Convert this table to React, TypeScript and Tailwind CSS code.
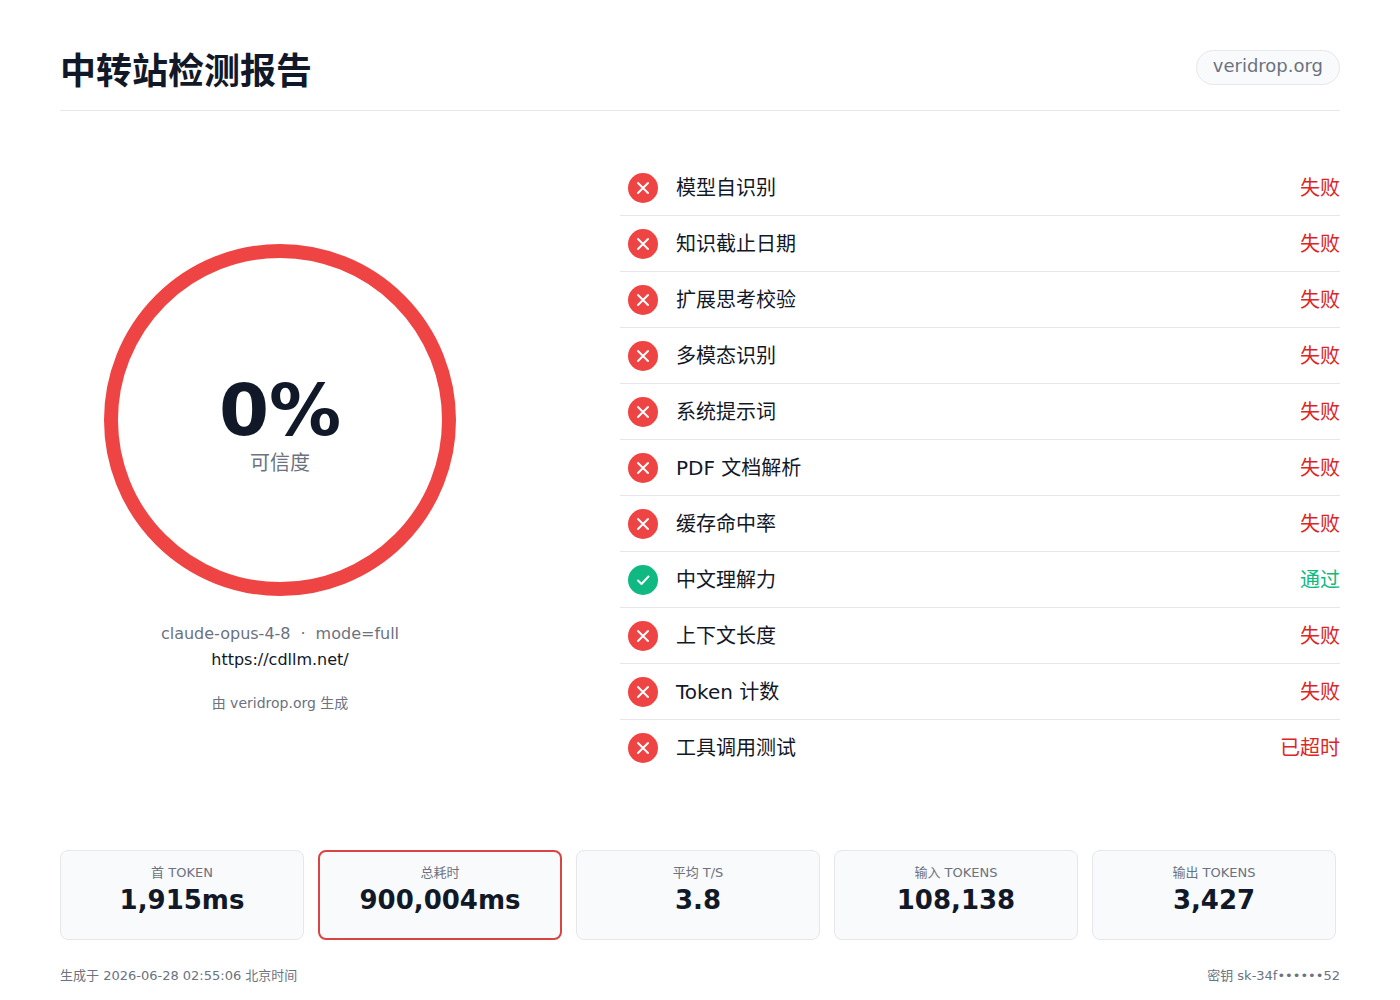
import React from "react";

type Item = { name: string; result: string; ok: boolean };

const items: Item[] = [
  { name: "模型自识别", result: "失败", ok: false },
  { name: "知识截止日期", result: "失败", ok: false },
  { name: "扩展思考校验", result: "失败", ok: false },
  { name: "多模态识别", result: "失败", ok: false },
  { name: "系统提示词", result: "失败", ok: false },
  { name: "PDF 文档解析", result: "失败", ok: false },
  { name: "缓存命中率", result: "失败", ok: false },
  { name: "中文理解力", result: "通过", ok: true },
  { name: "上下文长度", result: "失败", ok: false },
  { name: "Token 计数", result: "失败", ok: false },
  { name: "工具调用测试", result: "已超时", ok: false },
];

const stats = [
  { label: "首 TOKEN", value: "1,915ms", hi: false },
  { label: "总耗时", value: "900,004ms", hi: true },
  { label: "平均 T/S", value: "3.8", hi: false },
  { label: "输入 TOKENS", value: "108,138", hi: false },
  { label: "输出 TOKENS", value: "3,427", hi: false },
];

function FailIcon() {
  return (
    <svg width="30" height="30" viewBox="0 0 30 30">
      <circle cx="15" cy="15" r="15" fill="#ef4444" />
      <path d="M10 10 L20 20 M20 10 L10 20" stroke="#fff" strokeWidth="2" strokeLinecap="round" />
    </svg>
  );
}

function OkIcon() {
  return (
    <svg width="30" height="30" viewBox="0 0 30 30">
      <circle cx="15" cy="15" r="15" fill="#10b981" />
      <path d="M10 15.5 L13.5 19 L20.5 11.5" stroke="#fff" strokeWidth="2" fill="none" strokeLinecap="round" strokeLinejoin="round" />
    </svg>
  );
}

export default function App() {
  return (
    <div
      className="w-full min-h-screen bg-white text-[#111827]"
      style={{ fontFamily: '"DejaVu Sans", "Noto Sans CJK SC", sans-serif' }}
    >
      <div className="px-[60px] pt-[50px]">
        {/* Header */}
        <div className="flex items-start justify-between pb-[16px] border-b border-[#e5e7eb]">
          <h1 className="text-[36px] leading-[44px] font-bold text-[#111827]">中转站检测报告</h1>
          <div className="h-[35px] px-4 flex items-center rounded-full border border-[#e5e7eb] bg-[#f9fafb] text-[18px] leading-[22px] text-[#6b7280] pb-[3px]">
            veridrop.org
          </div>
        </div>

        {/* Main */}
        <div className="mt-[49px] flex gap-[120px]">
          <div className="w-[440px] pt-[84px] flex flex-col items-center">
            <div className="relative w-[352px] h-[352px]">
              <svg width="352" height="352" viewBox="0 0 352 352">
                <circle cx="176" cy="176" r="169" fill="none" stroke="#ef4444" strokeWidth="14" />
              </svg>
              <div className="absolute inset-0 flex flex-col items-center justify-center">
                <div className="text-[72px] leading-[80px] font-bold text-[#111827] mt-[6px]">0%</div>
                <div className="text-[20px] leading-[28px] text-[#6b7280] mt-[-1px]">可信度</div>
              </div>
            </div>
            <div className="mt-[26px] text-[16px] leading-[24px] text-[#6b7280]">
              claude-opus-4-8<span className="mx-[10px]">·</span>mode=full
            </div>
            <div className="mt-[2px] text-[16px] leading-[24px] text-[#111827]">https://cdllm.net/</div>
            <div className="mt-[21px] text-[14px] leading-[20px] text-[#6b7280]">由 veridrop.org 生成</div>
          </div>

          <div className="flex-1 flex flex-col">
            {items.map((it, i) => (
              <div
                key={i}
                className={
                  "h-[56px] flex items-center pl-2 " +
                  (i < items.length - 1 ? "border-b border-[#e5e7eb]" : "")
                }
              >
                {it.ok ? <OkIcon /> : <FailIcon />}
                <div className="ml-[18px] flex-1 text-[20px] text-[#111827]">{it.name}</div>
                <div className={"text-[20px] " + (it.ok ? "text-[#10b981]" : "text-[#dc2626]")}>
                  {it.result}
                </div>
              </div>
            ))}
          </div>
        </div>

        {/* Stats */}
        <div className="mt-[74px] grid grid-cols-5 gap-[14px] pr-[4px]">
          {stats.map((s, i) => (
            <div
              key={i}
              className={
                "h-[90px] rounded-lg bg-[#f9fafb] flex flex-col items-center " +
                (s.hi ? "border-2 border-[#d94444] pt-[12px]" : "border border-[#e5e7eb] pt-[13px]")
              }
            >
              <div className="text-[13px] leading-[18px] text-[#6b7280]">{s.label}</div>
              <div className="mt-[2px] text-[26px] leading-[32px] font-bold text-[#111827]">{s.value}</div>
            </div>
          ))}
        </div>

        {/* Footer */}
        <div className="mt-[27px] flex justify-between text-[13px] leading-[18px] text-[#6b7280]">
          <div>生成于 2026-06-28 02:55:06 北京时间</div>
          <div>密钥 sk-34f••••••52</div>
        </div>
      </div>
    </div>
  );
}
